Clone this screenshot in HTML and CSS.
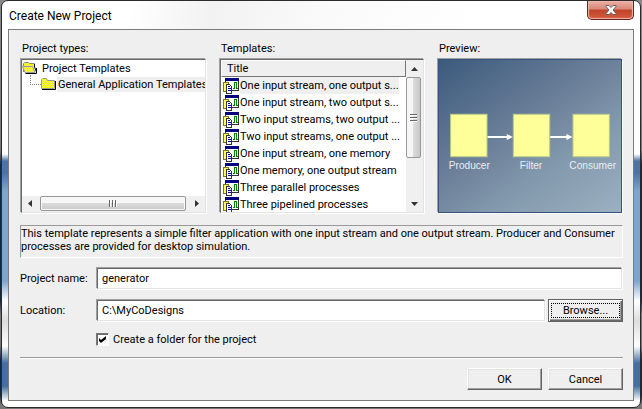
FILE: index.html
```html
<!DOCTYPE html>
<html lang="en">
<head>
<meta charset="utf-8">
<title>Create New Project</title>
<link rel="stylesheet" href="styles.css">
</head>
<body>
<svg class="defs" aria-hidden="true">
  <defs>
    <pattern id="dither" width="2" height="2" patternUnits="userSpaceOnUse">
      <rect width="2" height="2" fill="#ffff00"/>
      <rect width="1" height="1" fill="#e6e65a"/>
      <rect x="1" y="1" width="1" height="1" fill="#e6e65a"/>
    </pattern>
    <symbol id="template" viewBox="0 0 16 16">
      <g shape-rendering="crispEdges">
        <path d="M2 0h14v13H2z" fill="#fff"/>
        <path d="M2.500 2v10M15.500 2v10.500H9" stroke="#333" fill="none"/>
        <path d="M2 0h14v3H2z" fill="#000080"/>
        <path d="M.5 4.500h5v9h-5z" fill="#ffff66" stroke="#77772a"/>
        <path d="M3.500 6.500h3l2 2v7h-5z" fill="#fff" stroke="#333"/>
        <path d="M5 8.500h2M5 10.500h3M5 12.500h3" stroke="#0000a0"/>
        <path d="M10 10.500h1.500v-6h2v6H15" fill="none" stroke="#008000"/>
      </g>
    </symbol>
  </defs>
</svg>
<main class="window">
  <header class="titlebar">
    <h1>Create New Project</h1>
    <button class="close" type="button" aria-label="Close">
      <svg width="12" height="10" viewBox="0 0 12 10"><path d="M1 .5h3l2 2 2-2h3v1L8 5l3 3.500v1H8l-2-2-2 2H1v-1L4 5 1 1.500z" fill="#fff" stroke="#66606a"/></svg>
    </button>
  </header>
  <form class="dialog">
    <div class="columns">
      <section class="column">
        <h2>Project types:</h2>
        <div class="panel">
          <ul class="tree">
            <li>
              <svg class="folder" width="16" height="14" viewBox="0 0 16 14"><path d="M1.500 11V2.500l1-1h4l1 1h5v3" fill="url(#dither)" stroke="#888"/><path d="M14.500 7v5.500h-11M12.500 3v3l2 5" fill="none" stroke="#000"/><path d="M.5 5.500h10l2.500 6H3z" fill="url(#dither)" stroke="#999"/></svg>
              <span>Project Templates</span>
            </li>
            <li class="child">
              <svg class="folder" width="16" height="14" viewBox="0 0 16 14"><path d="M.5 11.500v-9l1-1h4l1 2h7v8z" fill="url(#dither)" stroke="#999"/><path d="M14.500 4v8.500H1" fill="none" stroke="#000"/></svg>
              <span class="selected">General Application Templates</span>
            </li>
          </ul>
          <div class="scroll horizontal">
            <svg width="17" height="16"><path d="M10 4v7L6 7.500z" fill="#333"/></svg>
            <div class="thumb"><i></i><i></i><i></i></div>
            <svg width="17" height="16"><path d="M7 4v7l4-3.500z" fill="#333"/></svg>
          </div>
        </div>
      </section>
      <section class="column">
        <h2>Templates:</h2>
        <div class="panel list">
          <table>
            <thead><tr><th>Title</th></tr></thead>
            <tbody>
              <tr><td><div class="item"><svg width="16" height="16"><use href="#template"/></svg><span class="selected">One input stream, one output s...</span></div></td></tr>
              <tr><td><div class="item"><svg width="16" height="16"><use href="#template"/></svg><span>One input stream, two output s...</span></div></td></tr>
              <tr><td><div class="item"><svg width="16" height="16"><use href="#template"/></svg><span>Two input streams, two output ...</span></div></td></tr>
              <tr><td><div class="item"><svg width="16" height="16"><use href="#template"/></svg><span>Two input streams, one output ...</span></div></td></tr>
              <tr><td><div class="item"><svg width="16" height="16"><use href="#template"/></svg><span>One input stream, one memory</span></div></td></tr>
              <tr><td><div class="item"><svg width="16" height="16"><use href="#template"/></svg><span>One memory, one output stream</span></div></td></tr>
              <tr><td><div class="item"><svg width="16" height="16"><use href="#template"/></svg><span>Three parallel processes</span></div></td></tr>
              <tr><td><div class="item"><svg width="16" height="16"><use href="#template"/></svg><span>Three pipelined processes</span></div></td></tr>
            </tbody>
          </table>
          <div class="scroll vertical">
            <svg width="16" height="17"><path d="M5 11h7L8.500 7z" fill="#333"/></svg>
            <div class="thumb"><i></i><i></i><i></i></div>
            <svg width="16" height="17"><path d="M5 7h7l-3.500 4z" fill="#333"/></svg>
          </div>
        </div>
      </section>
      <section class="column">
        <h2>Preview:</h2>
        <div class="panel preview">
          <svg viewBox="0 0 180 150" role="img" aria-label="Producer to Filter to Consumer">
            <g fill="#ffff99" stroke="#b9c88c"><path d="M11.500 53.500h36v42h-36zM73.500 53.500h36v42h-36zM132.500 53.500h36v42h-36z"/></g>
            <path d="M48 76h20M110 76h17" stroke="#fff" stroke-width="2"/>
            <path d="M67 73l6 3-6 3zM126 73l6 3-6 3z" fill="#fff"/>
            <g class="labels"><text x="30" y="108">Producer</text><text x="91" y="108">Filter</text><text x="152" y="108">Consumer</text></g>
          </svg>
        </div>
      </section>
    </div>
    <p class="description">This template represents a simple filter application with one input stream and one output stream. Producer and Consumer processes are provided for desktop simulation.</p>
    <div class="field">
      <label for="name">Project name:</label>
      <input id="name" type="text" value="generator">
    </div>
    <div class="field">
      <label for="location">Location:</label>
      <input id="location" type="text" value="C:\MyCoDesigns">
      <button class="button default" type="button"><span>Browse...</span></button>
    </div>
    <div class="check">
      <input id="folder" type="checkbox" checked>
      <label for="folder">Create a folder for the project</label>
    </div>
    <footer class="actions">
      <button class="button" type="submit">OK</button>
      <button class="button" type="button">Cancel</button>
    </footer>
  </form>
</main>
</body>
</html>
```
FILE: styles.css
```css
* { box-sizing: border-box; }
body {
  margin: 0;
  min-height: 100vh;
  display: flex;
  background: linear-gradient(#888 0, #777 150px, #12283f 165px, #12283f 300px, #777 315px, #777 345px, #12283f 360px, #12283f 395px, #777 405px);
  font: 11px/13px Roboto, "Liberation Sans", sans-serif;
  color: #000;
}
.defs { position: absolute; width: 0; height: 0; }
.window {
  flex: 1;
  margin: 0 1px 1px;
  display: flex;
  flex-direction: column;
  padding: 0 6px 6px;
  border: 1px solid #2c2a2c;
  border-radius: 7px;
  background:
    linear-gradient(100deg, #fff 0, #fff 20%, #f2f2f2 33%, #fafafa 50%, #fff 75%) 0 0 / 100% 29px no-repeat,
    linear-gradient(#fff, #fff) 0 100% / 100% 7px no-repeat,
    linear-gradient(#fff 0, #fff 153px, #4a74a5 160px, #4a74a5 172px, #7ba5d3 190px, #7ba5d3 280px, #fff 300px, #ddd 320px, #fff 345px, #4270a2 362px, #4270a2 385px, #fff 400px);
}
h1, h2, p, ul { margin: 0; padding: 0; font: inherit; }
.titlebar { height: 28px; display: flex; justify-content: space-between; }
h1 { padding-left: 1px; font: 12px/30px Roboto, "Liberation Sans", sans-serif; }
.close {
  width: 47px;
  height: 19px;
  padding: 0;
  display: flex;
  align-items: center;
  justify-content: center;
  border: 1px solid #672421;
  border-top: 0;
  border-radius: 0 0 5px 5px;
  background: linear-gradient(#eab0a5, #d98678 45%, #be4328 50%, #d65c3d);
  box-shadow: inset 0 0 1px 1px #efb6a9;
}
.dialog {
  flex: 1;
  padding: 12px 10px 0 11px;
  border: 1px solid #7b7b7b;
  background: #efefef;
}
.columns { display: grid; grid-template-columns: 187fr 206fr 186fr; gap: 12px; }
.column { min-width: 0; }
h2 { padding-left: 2px; margin-bottom: 4px; }
.panel, .field input {
  margin: 1px;
  border: 1px solid;
  border-color: #696969 #e3e3e3 #e3e3e3 #696969;
  box-shadow: -1px -1px #a0a0a0, 1px 1px #fff;
  background: #fff;
}
.panel { height: 154px; display: flex; flex-direction: column; overflow: hidden; }
.tree { flex: 1; list-style: none; }
.tree li { display: flex; align-items: center; gap: 3px; height: 16px; white-space: nowrap; }
.tree span { padding: 1px; }
.tree .child { gap: 0; }
.tree .child::before { content: ""; flex: none; width: 10px; height: 9px; margin: 0 0 8px 8px; border: dotted #888; border-width: 0 0 1px 1px; }
.folder { flex: none; }
.selected { background: #efefef; }
.list { flex-direction: row; }
table { flex: 1; align-self: flex-start; border-spacing: 0; }
th {
  height: 17px;
  padding: 0 5px;
  text-align: left;
  font-weight: normal;
  background: #efefef;
  border: 1px solid;
  border-color: #fff #777 #777 #fff;
}
td { padding: 0; }
.item { display: flex; align-items: center; height: 17px; padding-left: 2px; gap: 1px; white-space: nowrap; }
.item svg { flex: none; }
.item span { padding: 2px 0; }
.scroll { display: flex; background: #f0f0f0; }
.scroll > svg { flex: none; }
.horizontal { height: 16px; }
.vertical { width: 17px; flex-direction: column; }
.thumb { display: flex; align-items: center; justify-content: center; gap: 1px; border: 1px solid #979797; border-radius: 2px; }
.horizontal .thumb { flex: 0 1 146px; background: linear-gradient(#f6f6f6 50%, #dcdcdc 50%, #c8c8c8); box-shadow: inset 0 0 0 1px #f8f8f8; margin: 0 auto 1px 1px; }
.vertical .thumb { flex: 0 0 81px; width: 15px; margin-bottom: auto; flex-direction: column; background: linear-gradient(90deg, #f6f6f6 50%, #dcdcdc 50%, #c8c8c8); }
.thumb i { width: 2px; height: 7px; background: #666; border-right: 1px solid #fff; }
.vertical .thumb i { width: 7px; height: 2px; border: 0; border-bottom: 1px solid #fff; }
.preview { border-color: #35557f; background: linear-gradient(145deg, #3c5a7d, #6d819a 45%, #8197ab 65%, #9bb0c0); }
.preview svg { display: block; width: 100%; height: 100%; }
.labels { font: 10px "Liberation Sans", sans-serif; fill: #e9eef3; text-anchor: middle; }
.description { margin: 11px 0 9px; min-height: 33px; padding: 1px 0; border: 1px solid; border-color: #999 #fff #fff #999; }
.field { display: flex; align-items: center; margin-bottom: 9px; }
.field label { width: 76px; }
.field input { flex: 1; min-width: 0; height: 21px; padding: 0 4px; font: inherit; color: inherit; outline: 0; }
.button {
  width: 75px;
  height: 22px;
  padding: 0;
  font: inherit;
  color: inherit;
  background: #efefef;
  border: 1px solid;
  border-color: #fff #636363 #636363 #fff;
  box-shadow: inset -1px -1px #a0a0a0, inset 1px 1px #e2e2e2;
}
.default { height: 23px; border-color: #636363; margin-left: 2px; padding: 2px; box-shadow: inset 1px 1px #fff, inset -1px -1px #696969, inset -2px -2px #a0a0a0; }
.default span { display: block; border: 1px dotted #000; }
.check { display: flex; align-items: center; gap: 4px; padding: 2px 0 0 76px; }
.check input {
  appearance: none;
  display: grid;
  place-items: center;
  width: 13px;
  height: 13px;
  margin: 0;
  border: 1px solid;
  border-color: #777 #fff #fff #777;
  box-shadow: inset 1px 1px #696969;
  background: #fff;
}
.check input:checked::before {
  content: "";
  width: 7px;
  height: 7px;
  background: #000;
  clip-path: polygon(0 28%, 28% 57%, 100% 0, 100% 43%, 28% 100%, 0 71%);
}
.actions { display: flex; justify-content: flex-end; gap: 6px; margin-top: 11px; padding-top: 10px; border-top: 1px solid #999; box-shadow: inset 0 1px #fff; }
```
